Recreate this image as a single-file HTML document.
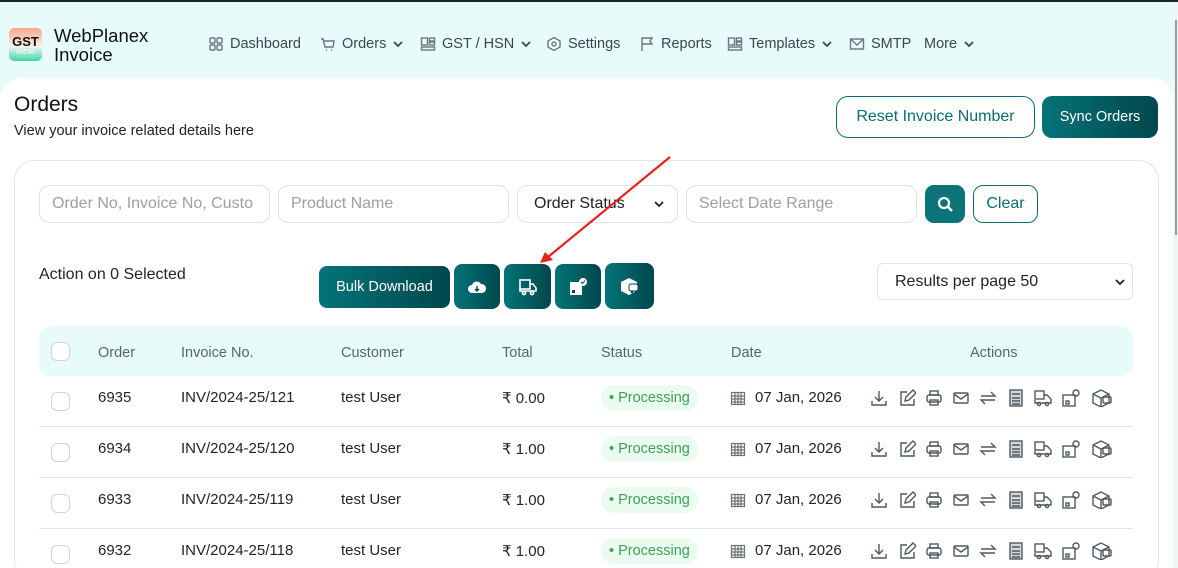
<!DOCTYPE html>
<html style="overflow:hidden;height:568px"><head><meta charset="utf-8"><style>
*{box-sizing:border-box;margin:0;padding:0}
body{width:1178px;height:568px;overflow:hidden;background:#e8fbfb;font-family:"Liberation Sans",sans-serif;position:relative;color:#1d2328}
.a{position:absolute}
.top{left:0;top:0;width:1178px;height:2px;background:#1b2626}
.sb{left:1174px;top:2px;width:4px;height:566px;background:#f4f4f4}
.thumb{left:1175px;top:20px;width:2px;height:215px;background:#9a9a9a}
.nav{top:36px;font-size:14.5px;color:#3a4650;display:flex;align-items:center;gap:6px}
.nav svg{stroke:#6b7680;fill:none;stroke-width:1.4}
.panel{left:0;top:78px;width:1173px;height:490px;background:#fff;border-radius:22px 22px 0 0}
.card{left:14px;top:160px;width:1145px;height:420px;border:1px solid #e3e6e8;border-radius:20px;background:#fff}
.inp{top:185px;height:38px;border:1px solid #dfe3e6;border-radius:10px;font-size:16px;color:#9aa0a5;padding:0 12px;line-height:36px;white-space:nowrap;overflow:hidden}
.btn{background:linear-gradient(90deg,#037478,#02474c);border-radius:8px;color:#fff;display:flex;align-items:center;justify-content:center}
.th{top:345px;font-size:14.5px;color:#5a646c}
.td{font-size:15px;color:#1d2328}
.cb{width:19px;height:19px;border:1px solid #cfd4d8;border-radius:6px;background:#fff}
.pill{background:#ebfbef;color:#3aa35a;font-size:14.5px;border-radius:13px;padding:0 8px;height:26px;line-height:26px}
.ic svg{stroke:#4e5860;fill:none;stroke-width:1.4}
.chev{stroke:#3a4650!important;stroke-width:1.8!important}
</style></head><body>
<div class="a top"></div>
<div class="a" style="left:9px;top:28px;width:33px;height:33px;border-radius:5px;background:linear-gradient(180deg,#f7a98d 0%,#fbe1d3 45%,#f4f6f2 55%,#3ed8a7 100%);text-align:center">
<div style="font-size:13px;font-weight:bold;color:#111;margin-top:7px;line-height:13px">GST</div>
<div style="font-size:7px;color:#fff;line-height:8px;margin-top:1px">INDIA</div></div>
<div class="a" style="left:54px;top:26px;font-size:18.5px;line-height:19px;color:#111">WebPlanex<br>Invoice</div>
<div class="a nav" style="left:208px"><svg width="16" height="16"><rect x="2" y="2" width="5" height="5" rx="1"/><rect x="9" y="2" width="5" height="5" rx="1"/><rect x="2" y="9" width="5" height="5" rx="1"/><rect x="9" y="9" width="5" height="5" rx="1"/></svg>Dashboard</div>
<div class="a nav" style="left:320px"><svg width="16" height="16"><path d="M1 3h2l2 8h8l1-6H4M6 14h1M11 14h1"/></svg>Orders <svg width="12" height="12" class="chev"><path d="M2 4l4 4 4-4"/></svg></div>
<div class="a nav" style="left:420px"><svg width="16" height="16"><rect x="1.5" y="2" width="6" height="7"/><rect x="9.5" y="2" width="5" height="3"/><rect x="9.5" y="6" width="5" height="3"/><rect x="1.5" y="11" width="13" height="3"/></svg>GST / HSN <svg width="12" height="12" class="chev"><path d="M2 4l4 4 4-4"/></svg></div>
<div class="a nav" style="left:546px"><svg width="16" height="16"><path d="M8 1.5l6 3.5v6l-6 3.5-6-3.5V5z"/><circle cx="8" cy="8" r="2"/></svg>Settings</div>
<div class="a nav" style="left:639px"><svg width="16" height="16"><path d="M3 15V2h10l-2 3 2 3H3"/></svg>Reports</div>
<div class="a nav" style="left:727px"><svg width="16" height="16"><rect x="1.5" y="2" width="6" height="7"/><rect x="9.5" y="2" width="5" height="3"/><rect x="9.5" y="6" width="5" height="3"/><rect x="1.5" y="11" width="13" height="3"/></svg>Templates <svg width="12" height="12" class="chev"><path d="M2 4l4 4 4-4"/></svg></div>
<div class="a nav" style="left:849px"><svg width="16" height="16"><rect x="1.5" y="3" width="13" height="10"/><path d="M1.5 3l6.5 6 6.5-6"/></svg>SMTP</div>
<div class="a nav" style="left:924px">More <svg width="12" height="12" class="chev"><path d="M2 4l4 4 4-4"/></svg></div>

<div class="a panel"></div>
<div class="a sb"></div><div class="a thumb"></div>
<div class="a" style="left:14px;top:93px;font-size:21px;color:#111">Orders</div>
<div class="a" style="left:14px;top:123px;font-size:14.5px;color:#222">View your invoice related details here</div>
<div class="a" style="left:836px;top:96px;width:199px;height:42px;border:1px solid #0a6d71;border-radius:12px;color:#0a6d71;font-size:16px;text-align:center;line-height:40px">Reset Invoice Number</div>
<div class="a btn" style="left:1042px;top:96px;width:116px;height:42px;border-radius:10px;font-size:14.5px">Sync Orders</div>

<div class="a card"></div>
<div class="a inp" style="left:39px;width:231px">Order No, Invoice No, Custo</div>
<div class="a inp" style="left:278px;width:231px">Product Name</div>
<div class="a inp" style="left:517px;width:161px;color:#222;display:flex;justify-content:space-between;padding-left:16px">Order Status<svg width="12" height="36"><path d="M2 16l4 4 4-4" stroke="#222" stroke-width="1.8" fill="none"/></svg></div>
<div class="a inp" style="left:686px;width:231px">Select Date Range</div>
<div class="a" style="left:925px;top:185px;width:40px;height:38px;background:#0a7478;border-radius:9px"><svg width="40" height="38"><circle cx="19" cy="18" r="5" stroke="#fff" stroke-width="2.2" fill="none"/><path d="M23 22l4 4" stroke="#fff" stroke-width="2.4"/></svg></div>
<div class="a" style="left:973px;top:185px;width:65px;height:38px;border:1px solid #0a6d71;border-radius:10px;color:#0a6d71;font-size:16px;text-align:center;line-height:36px">Clear</div>

<div class="a" style="left:39px;top:266px;font-size:16px;color:#1d2328">Action on 0 Selected</div>
<div class="a btn" style="left:319px;top:266px;width:131px;height:42px;font-size:14.5px">Bulk Download</div>
<div class="a btn" style="left:454px;top:264px;width:46px;height:45px"><svg width="20" height="16"><path d="M5 14a4 4 0 010-8 5 5 0 019-1 4 4 0 011 9z" fill="#fff"/><path d="M10 7v5M8 10l2 2 2-2" stroke="#02474c" stroke-width="1.4" fill="none"/></svg></div>
<div class="a btn" style="left:504px;top:264px;width:47px;height:45px"><svg width="20" height="18" fill="none" stroke="#fff" stroke-width="1.6"><rect x="2" y="2" width="10" height="9"/><path d="M12 6h3l3 4v3h-16v-2"/><circle cx="6" cy="15" r="1.6"/><circle cx="14" cy="15" r="1.6"/></svg></div>
<div class="a btn" style="left:555px;top:264px;width:46px;height:45px"><svg width="20" height="20"><rect x="2" y="5" width="12" height="13" fill="#fff"/><rect x="4" y="13" width="3" height="3" fill="#02474c"/><circle cx="15" cy="5" r="4" fill="#fff"/><path d="M13 5l1.5 1.5 2.5-3" stroke="#02474c" fill="none"/></svg></div>
<div class="a btn" style="left:605px;top:263px;width:49px;height:46px"><svg width="22" height="20"><path d="M2 6l8-4 8 4v9l-8 4-8-4z" fill="#fff"/><rect x="10" y="8" width="9" height="7" rx="2" fill="#fff" stroke="#02474c"/><circle cx="13" cy="16" r="1.3" fill="#02474c"/><circle cx="17" cy="16" r="1.3" fill="#02474c"/></svg></div>
<div class="a" style="left:877px;top:263px;width:256px;height:37px;border:1px solid #dfe3e6;border-radius:6px;font-size:16px;color:#222;line-height:35px;padding-left:17px">Results per page 50<svg style="position:absolute;right:6px;top:0" width="12" height="36"><path d="M2 16l4 4 4-4" stroke="#222" stroke-width="1.8" fill="none"/></svg></div>

<div class="a" style="left:39px;top:326px;width:1094px;height:50px;background:#e8fbfb;border-radius:12px"></div>
<div class="a cb" style="left:51px;top:342px"></div>
<div class="a th" style="left:98px">Order</div>
<div class="a th" style="left:181px">Invoice No.</div>
<div class="a th" style="left:341px">Customer</div>
<div class="a th" style="left:502px">Total</div>
<div class="a th" style="left:601px">Status</div>
<div class="a th" style="left:731px">Date</div>
<div class="a th" style="left:970px">Actions</div>

<div id="rows"></div>
<script>
var d=[["6935","121","0.00"],["6934","120","1.00"],["6933","119","1.00"],["6932","118","1.00"]];
var h="";
var ic='<svg width="18" height="18"><path d="M9 2v10M5 8l4 4 4-4M2 12v4h14v-4"/></svg>|<svg width="18" height="18"><path d="M9 3H3v13h13v-6M7 12l1-4 7-7 3 3-7 7z"/></svg>|<svg width="18" height="18"><rect x="5" y="2" width="8" height="4"/><rect x="2" y="6" width="14" height="7" rx="2"/><rect x="5" y="11" width="8" height="5"/></svg>|<svg width="18" height="18"><rect x="2" y="4" width="14" height="10" rx="1"/><path d="M2 5l7 5 7-5"/></svg>|<svg width="18" height="18"><path d="M2 7h14l-4-4M16 11H2l4 4"/></svg>|<svg width="18" height="18"><rect x="3" y="1" width="12" height="16" fill="#d5d8da"/><path d="M5 5h8M5 9h8M5 12h8M5 15h8"/></svg>|<svg width="20" height="18"><rect x="2" y="2" width="9" height="8"/><path d="M11 6h3l4 4v4H2v-3"/><circle cx="6" cy="15" r="1.6"/><circle cx="14" cy="15" r="1.6"/></svg>|<svg width="20" height="18"><rect x="2" y="6" width="12" height="11"/><rect x="5" y="12" width="3" height="3"/><circle cx="15" cy="4" r="3"/></svg>|<svg width="22" height="18"><path d="M2 5l8-4 8 4v9l-8 4-8-4zM2 5l8 4 8-4M10 9v9"/><rect x="12" y="8" width="8" height="6" rx="1"/></svg>';
ic=ic.split("|");var ix=[870,898,925,952,979,1007,1033,1061,1091];
d.forEach(function(r,i){var y=398+i*51;
h+='<div class="a cb" style="left:51px;top:'+(y-6)+'px"></div>';
h+='<div class="a td" style="left:98px;top:'+(y-9)+'px">'+r[0]+'</div>';
h+='<div class="a td" style="left:181px;top:'+(y-9)+'px">INV/2024-25/'+r[1]+'</div>';
h+='<div class="a td" style="left:341px;top:'+(y-9)+'px">test User</div>';
h+='<div class="a td" style="left:502px;top:'+(y-9)+'px">&#8377; '+r[2]+'</div>';
h+='<div class="a pill" style="left:601px;top:'+(y-13)+'px">&bull; Processing</div>';
h+='<div class="a" style="left:730px;top:'+(y-8)+'px"><svg width="16" height="16" fill="none" stroke="#6b7378" stroke-width="1.2"><rect x="1.5" y="2.5" width="13" height="12"/><path d="M1.5 6h13M1.5 9h13M1.5 12h13M5 2.5v12M8 2.5v12M11 2.5v12"/></svg></div>';
h+='<div class="a td" style="left:755px;top:'+(y-9)+'px">07 Jan, 2026</div>';
ic.forEach(function(s,k){h+='<div class="a ic" style="left:'+ix[k]+'px;top:'+(y-9)+'px">'+s+'</div>'});
if(i<3)h+='<div class="a" style="left:39px;top:'+(y+28)+'px;width:1094px;height:1px;background:#e2e5e7"></div>';
});
document.getElementById("rows").innerHTML=h;
</script>
<svg class="a" style="left:0;top:0" width="1178" height="568"><path d="M670 157L548 257" stroke="#e8201a" stroke-width="2.2"/><path d="M540 263l5-11 8 8z" fill="#e8201a"/></svg>
</body></html>
